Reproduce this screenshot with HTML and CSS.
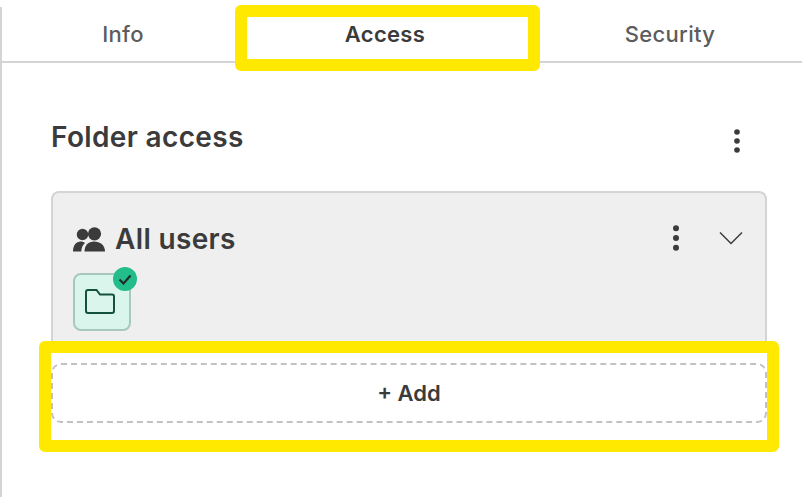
FILE: index.html
```html
<!DOCTYPE html>
<html lang="en">
<head>
  <meta charset="UTF-8">
  <title>Folder access</title>
  <link rel="stylesheet" href="styles.css">
</head>
<body>

<div class="panel">
  <div class="tabs">
    <div class="tab tab-info">Info</div>
    <div class="tab tab-access">Access</div>
    <div class="tab tab-security">Security</div>
  </div>

  <div class="content">
    <div class="section-head">
      <h2>Folder access</h2>
      <svg class="dots dots-head" width="8" height="24" viewBox="0 0 8 24"><circle cx="4" cy="3" r="2.800"/><circle cx="4" cy="12" r="2.800"/><circle cx="4" cy="21" r="2.800"/></svg>
    </div>

    <div class="card">
      <div class="card-head">
        <svg class="users" width="32" height="25" viewBox="0 0 32 25">
          <circle cx="9.5" cy="7.500" r="5.700"/>
          <circle cx="21.500" cy="6.800" r="6.600"/>
          <path d="M0 24.500C0 18 3.500 14.500 7.500 14.500C9.500 14.500 10.800 15 12 16C9.500 18 8.500 21 8.300 24.500Z"/>
          <path d="M11.500 24.500C11.500 18 15.500 14.500 21 14.500C27 14.500 32 18 32 24.500Z"/>
        </svg>
        <span class="card-title">All users</span>
        <svg class="dots dots-card" width="8" height="26" viewBox="0 0 8 26"><circle cx="4" cy="3.200" r="3"/><circle cx="4" cy="13" r="3"/><circle cx="4" cy="22.800" r="3"/></svg>
        <svg class="chevron" width="24" height="14" viewBox="0 0 24 14"><path d="M1 1.500L12 12.500L23 1.500"/></svg>
      </div>
      <div class="perm">
        <svg class="folder" width="30" height="25" viewBox="0 0 30 25"><path d="M1 3C1 1.800 1.800 1 3 1H11.500L15 5.500H27C28.200 5.500 29 6.300 29 7.500V22C29 23.200 28.200 24 27 24H3C1.800 24 1 23.200 1 22Z"/></svg>
        <span class="perm-badge">
          <svg width="14" height="11" viewBox="0 0 14 11"><path d="M1.500 5.500L5.500 9.500L12.500 1.500"/></svg>
        </span>
      </div>
    </div>

    <div class="add-row">
      <button class="add-btn">+ Add</button>
    </div>
  </div>
</div>

<!-- yellow callouts over the screenshot -->
<div class="callout callout-tab"></div>
<div class="callout callout-add"></div>

</body>
</html>
```

FILE: styles.css
```css
html, body {
  margin: 0;
  height: 497px;
  overflow: hidden;
}

body {
  font-family: Inter, "Liberation Sans", sans-serif;
  background: white;
  color: #3b3b3b;
  position: relative;
}

.panel {
  margin-top: 7px;
  height: 490px;
  border-left: 2px solid #d4d4d4;
  box-sizing: border-box;
}

.tabs {
  display: flex;
  height: 56px;
  border-bottom: 2px solid #d4d4d4;
  box-sizing: border-box;
}

.tab {
  font-size: 22px;
  font-weight: 500;
  letter-spacing: 0.3px;
  color: #5c5c5c;
  display: flex;
  align-items: center;
  justify-content: center;
  padding-bottom: 1px;
  box-sizing: border-box;
}

.tab-info { width: 242px; }
.tab-access { width: 282px; color: #3b3b3b; font-weight: 600; }
.tab-security { width: 276px; padding-left: 12px; }

.content {
  padding: 0 35px 0 49px;
}

.section-head {
  display: flex;
  justify-content: space-between;
  align-items: center;
  height: 40px;
  margin-top: 54px;
  padding-right: 26px;
}

.section-head h2 {
  margin: 0;
  font-size: 28px;
  font-weight: 600;
  letter-spacing: 0.35px;
}

.dots { fill: #3b3b3b; }
.dots-head { margin-top: 8px; }
.dots-card { margin-bottom: 2px; }

.card {
  margin-top: 34px;
  height: 161px;
  background: #efefef;
  border: 2px solid #d4d4d4;
  border-bottom: 0;
  border-radius: 8px 8px 0 0;
  padding: 29px 22px 0 20px;
  box-sizing: border-box;
}

.card-head {
  display: flex;
  align-items: center;
  height: 34px;
}

.users { fill: #3b3b3b; margin-right: 10px; }

.card-title {
  font-size: 28px;
  font-weight: 600;
  letter-spacing: 0.35px;
  flex: 1;
}

.chevron {
  fill: none;
  stroke: #3b3b3b;
  stroke-width: 1.5;
  margin: 0 0 2px 39px;
}

.perm {
  position: relative;
  margin-top: 17px;
  width: 58px;
  height: 58px;
  background: #daf5ec;
  border: 2px solid #a6c9bb;
  border-radius: 8px;
  box-sizing: border-box;
  display: flex;
  align-items: center;
  justify-content: center;
}

.folder {
  fill: none;
  stroke: #14513f;
  stroke-width: 2;
  margin: 0 4px 2px 0;
}

.perm-badge {
  position: absolute;
  top: -8px;
  right: -8px;
  width: 24px;
  height: 24px;
  border-radius: 50%;
  background: #22bd8a;
  display: flex;
  align-items: center;
  justify-content: center;
}

.perm-badge svg {
  fill: none;
  stroke: #1f2d28;
  stroke-width: 2.2;
}

.add-row {
  background: white;
  height: 88px;
  padding-top: 11px;
  box-sizing: border-box;
}

.add-btn {
  display: block;
  width: 100%;
  height: 60px;
  background: white;
  border: 2px dashed #c2c2c2;
  border-radius: 10px;
  font-family: inherit;
  font-size: 22px;
  font-weight: 600;
  color: #3b3b3b;
}

/* callouts */
.callout {
  position: absolute;
  border: 12px solid #ffe900;
  border-radius: 6px;
  box-sizing: border-box;
}

.callout-tab {
  left: 235px;
  top: 5px;
  width: 305px;
  height: 66px;
}

.callout-add {
  left: 39px;
  top: 341px;
  width: 740px;
  height: 111px;
}
```
